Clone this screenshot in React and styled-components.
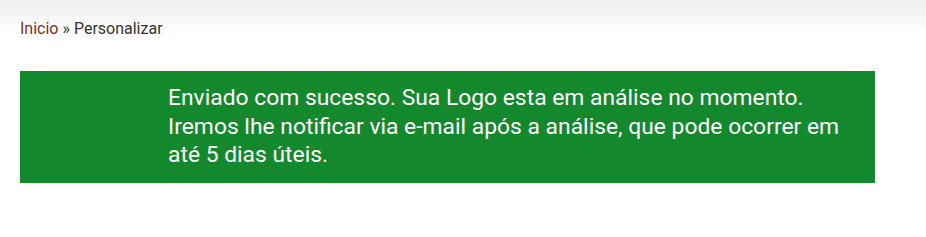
import React from "react";
import styled, { createGlobalStyle } from "styled-components";

const GlobalStyle = createGlobalStyle`
  html, body {
    margin: 0;
    padding: 0;
    background: #fff;
  }
  body {
    font-family: Roboto, "Liberation Sans", Arial, sans-serif;
  }
`;

const Page = styled.div`
  min-height: 237px;
  background: linear-gradient(to bottom, #efefef 0px, #ffffff 34px, #ffffff 100%);
`;

const Breadcrumb = styled.div`
  padding: 18.5px 20px 0;
  font-size: 16px;
  line-height: 20px;
  color: #333;
`;

const Crumb = styled.a`
  color: ${(p) => (p.$active ? "#333" : "#80301c")};
  text-decoration: none;
`;

const Sep = styled.span`
  color: #333;
`;

const Alert = styled.div`
  margin: 32.5px 51px 0 20px;
  background: #14882c;
  padding: 13px 20px 13.5px 148px;
`;

const Message = styled.p`
  margin: 0;
  color: #fff;
  font-size: 22.85px;
  line-height: 28.5px;
`;

export default function App() {
  return (
    <>
      <GlobalStyle />
      <Page>
        <Breadcrumb>
          <Crumb href="#">Inicio</Crumb> <Sep>»</Sep> <Crumb $active>Personalizar</Crumb>
        </Breadcrumb>
        <Alert>
          <Message>
            Enviado com sucesso. Sua Logo esta em análise no momento. Iremos lhe notificar via
            e-mail após a análise, que pode ocorrer em até 5 dias úteis.
          </Message>
        </Alert>
      </Page>
    </>
  );
}
